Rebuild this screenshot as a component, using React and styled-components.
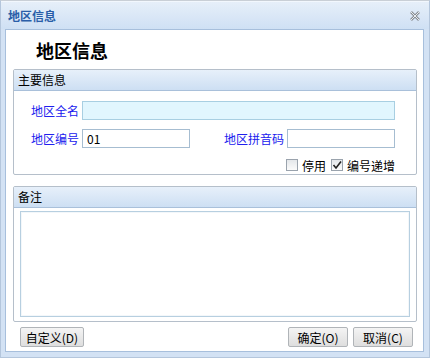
import React from "react";
import styled, { createGlobalStyle } from "styled-components";

const Global = createGlobalStyle`
  html, body { margin: 0; padding: 0; background: #fff; }
  body { font-family: "Noto Sans CJK SC", "Liberation Sans", sans-serif; font-size: 12px; }
`;

const Window = styled.div`
  width: 430px;
  height: 358px;
  box-sizing: border-box;
  background: #d3e2f4;
  border: 1px solid #b4c6dc;
  border-top-color: #c9cfd6;
  display: flex;
  flex-direction: column;
  padding: 0 5px 5px 4px;
`;

const TitleBar = styled.div`
  height: 28px;
  display: flex;
  align-items: center;
  justify-content: space-between;
  margin: 0 -5px 0 -4px;
  padding: 0 9px 0 7px;
  background: linear-gradient(#e6eff9, #cfe0f4);
  border-top: 1px solid #f2f7fd;
`;

const TitleText = styled.span`
  color: #2a5ea8;
  font-weight: bold;
  font-size: 12px;
`;

const Body = styled.div`
  flex: 1;
  background: #fff;
  border: 1px solid #a7bfdc;
  display: flex;
  flex-direction: column;
  padding: 0 6px 4px 7px;
`;

const BigTitle = styled.div`
  height: 39px;
  display: flex;
  align-items: center;
  padding-left: 23px;
  font-size: 18px;
  font-weight: bold;
  color: #000;
`;

const Section = styled.div`
  border: 1px solid #b5bfca;
  border-radius: 2px;
  height: ${(p) => p.h}px;
  box-sizing: border-box;
  margin-bottom: ${(p) => p.mb || 0}px;
  display: flex;
  flex-direction: column;
`;

const SectionHead = styled.div`
  height: 20px;
  line-height: 20px;
  padding-left: 4px;
  background: linear-gradient(#e7f0fa, #cddff3);
  border-bottom: 1px solid #a9c0da;
  color: #000;
  font-size: 12px;
`;

const FieldGrid = styled.div`
  display: grid;
  grid-template-columns: 51px 108px 97px 108px;
  grid-auto-rows: 19px;
  row-gap: 9px;
  padding: 10px 0 0 17px;
  align-items: center;
`;

const Label = styled.span`
  color: #2020ee;
  font-size: 12px;
  text-align: ${(p) => (p.right ? "right" : "left")};
  padding-right: ${(p) => (p.right ? 3 : 0)}px;
`;

const Input = styled.div`
  height: 19px;
  box-sizing: border-box;
  border: 1px solid ${(p) => (p.required ? "#a8cfe2" : "#a6bdd1")};
  background: ${(p) => (p.required ? "#e1f6fe" : "#fff")};
  grid-column: ${(p) => p.span || "auto"};
  padding-left: 4px;
  line-height: 17px;
  font-size: 12px;
  color: #000;
`;

const CheckRow = styled.div`
  grid-column: 1 / -1;
  justify-self: end;
  display: flex;
  align-items: center;
  gap: 5px;
  margin-top: -3px;
`;

const Check = styled.label`
  display: flex;
  align-items: center;
  gap: 4px;
  color: #000;
  font-size: 12px;
`;

const Box = styled.span`
  width: 12px;
  height: 12px;
  box-sizing: border-box;
  border: 1px solid #9aa3ad;
  background: linear-gradient(#e4e7ea, #fbfbfb);
  display: inline-flex;
  align-items: center;
  justify-content: center;
`;

const Memo = styled.div`
  flex: 1;
  margin: 3px 6px 4px 6px;
  border: 1px solid #b7cfe0;
  box-shadow: inset 0 0 0 1px #f3f7fa;
`;

const Footer = styled.div`
  display: flex;
  align-items: center;
  gap: 5px;
  margin-top: 5px;
  padding: 0 4px 0 7px;
`;

const Button = styled.button`
  height: 20px;
  width: ${(p) => p.w}px;
  margin-left: ${(p) => (p.push ? "auto" : 0)};
  border: 1px solid #b0b4b8;
  border-radius: 2px;
  background: linear-gradient(#f4f4f4, #dedede);
  font-family: "Noto Sans CJK SC", "Liberation Sans", sans-serif;
  font-size: 12px;
  color: #000;
  padding: 0;
`;

const CloseIcon = () => (
  <svg width="10" height="10" viewBox="0 0 10 10">
    <path d="M1 1 L9 9 M9 1 L1 9" stroke="#8a8f95" strokeWidth="2.6" fill="none" />
    <path d="M1 1 L9 9 M9 1 L1 9" stroke="#e8ecef" strokeWidth="1" fill="none" />
  </svg>
);

const Tick = () => (
  <svg width="10" height="10" viewBox="0 0 10 10">
    <path d="M1.5 5 L4 8 L9 1.5" stroke="#222" strokeWidth="1.6" fill="none" />
  </svg>
);

export default function App() {
  return (
    <>
      <Global />
      <Window>
        <TitleBar>
          <TitleText>地区信息</TitleText>
          <CloseIcon />
        </TitleBar>
        <Body>
          <BigTitle>地区信息</BigTitle>
          <Section h={106} mb={11}>
            <SectionHead>主要信息</SectionHead>
            <FieldGrid>
              <Label>地区全名</Label>
              <Input required span="2 / -1" />
              <Label>地区编号</Label>
              <Input>01</Input>
              <Label right>地区拼音码</Label>
              <Input />
              <CheckRow>
                <Check>
                  <Box />
                  停用
                </Check>
                <Check>
                  <Box>
                    <Tick />
                  </Box>
                  编号递增
                </Check>
              </CheckRow>
            </FieldGrid>
          </Section>
          <Section h={136}>
            <SectionHead>备注</SectionHead>
            <Memo />
          </Section>
          <Footer>
            <Button w={64}>自定义(D)</Button>
            <Button w={60} push>确定(O)</Button>
            <Button w={60}>取消(C)</Button>
          </Footer>
        </Body>
      </Window>
    </>
  );
}
